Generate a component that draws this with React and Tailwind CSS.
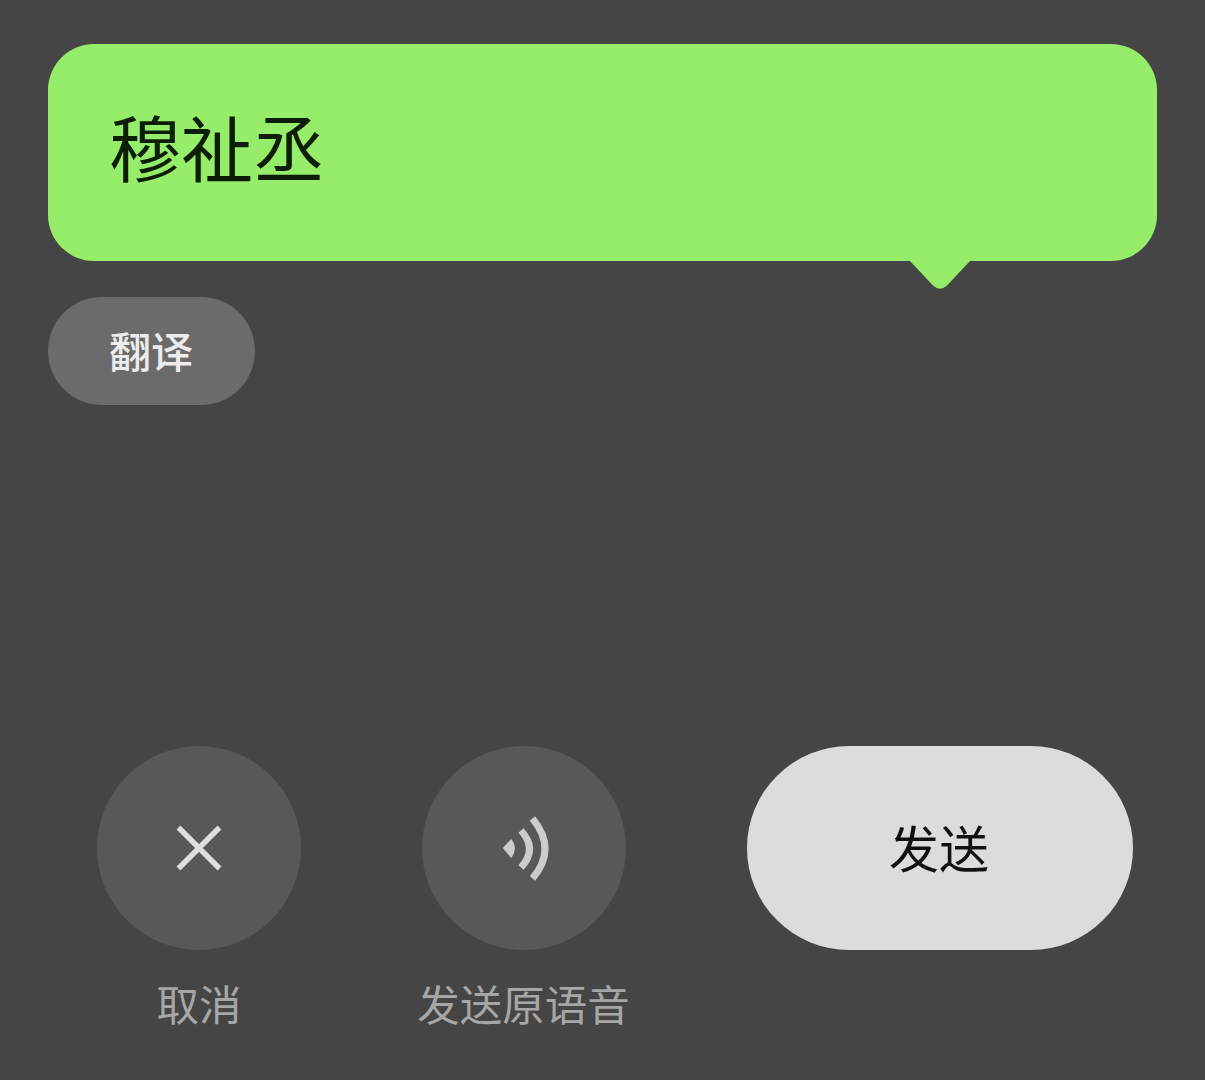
import React from 'react';

const cjk = { fontFamily: '"Noto Sans CJK SC", sans-serif' };

function Tail() {
  return (
    <svg className="absolute left-[861px] top-[216px]" width="62" height="30" viewBox="0 0 62 30">
      <path d="M0 0 L24 25.5 Q31 32 38 25.5 L62 0 Z" fill="#96ed6a" />
    </svg>
  );
}

function CloseIcon() {
  return (
    <svg width="48" height="48" viewBox="0 0 48 48" fill="none" stroke="#dedede" strokeWidth="5.5">
      <path d="M3.5 3.5 L44.5 44.5 M44.5 3.5 L3.5 44.5" />
    </svg>
  );
}

function VoiceIcon() {
  return (
    <svg width="50" height="66" viewBox="498.5 815 50 66" fill="none">
      <path d="M502.3 848 L510.7 839 Q518 848 510.7 858 Z" fill="#cccccc" />
      <path d="M520.5 830.5 Q537.5 849 520.5 867.5" stroke="#cccccc" strokeWidth="7" />
      <path d="M532 818.5 Q557 849 532 878.5" stroke="#cccccc" strokeWidth="7" />
    </svg>
  );
}

function RoundAction({ label, children }) {
  return (
    <div className="flex w-[204px] flex-col items-center">
      <button className="flex h-[204px] w-[204px] items-center justify-center rounded-full bg-[#585858]">
        {children}
      </button>
      <span className="mt-[27px] whitespace-nowrap text-[42.5px] leading-[52px] text-[#a6a6a6]">{label}</span>
    </div>
  );
}

export default function App() {
  return (
    <div className="flex h-[1080px] w-[1205px] flex-col overflow-hidden bg-[#454545] px-[48px] pt-[44px]" style={cjk}>
      <div className="relative flex h-[217px] w-[1109px] items-center rounded-[46px] bg-[#96ed6a] pb-[16px] pl-[61px]">
        <span className="text-[72px] leading-[90px] font-normal text-[#0c1f06]">穆祉丞</span>
        <Tail />
      </div>

      <button className="mt-[36px] flex h-[108px] w-[207px] items-center justify-center rounded-full bg-[#6b6b6b] pb-[3px] pr-[1px] text-[42px] leading-[50px] font-medium text-[#ececec]">
        翻译
      </button>

      <div className="mt-[341px] flex items-start pl-[49px]">
        <RoundAction label="取消"><CloseIcon /></RoundAction>
        <div className="ml-[120.5px]">
          <RoundAction label="发送原语音"><VoiceIcon /></RoundAction>
        </div>
        <button className="ml-[121.5px] flex h-[204px] w-[386px] items-center justify-center rounded-full bg-[#dcdcdc] pb-[5px] pr-[2px] text-[50px] leading-[60px] text-[#111111]">
          发送
        </button>
      </div>
    </div>
  );
}
